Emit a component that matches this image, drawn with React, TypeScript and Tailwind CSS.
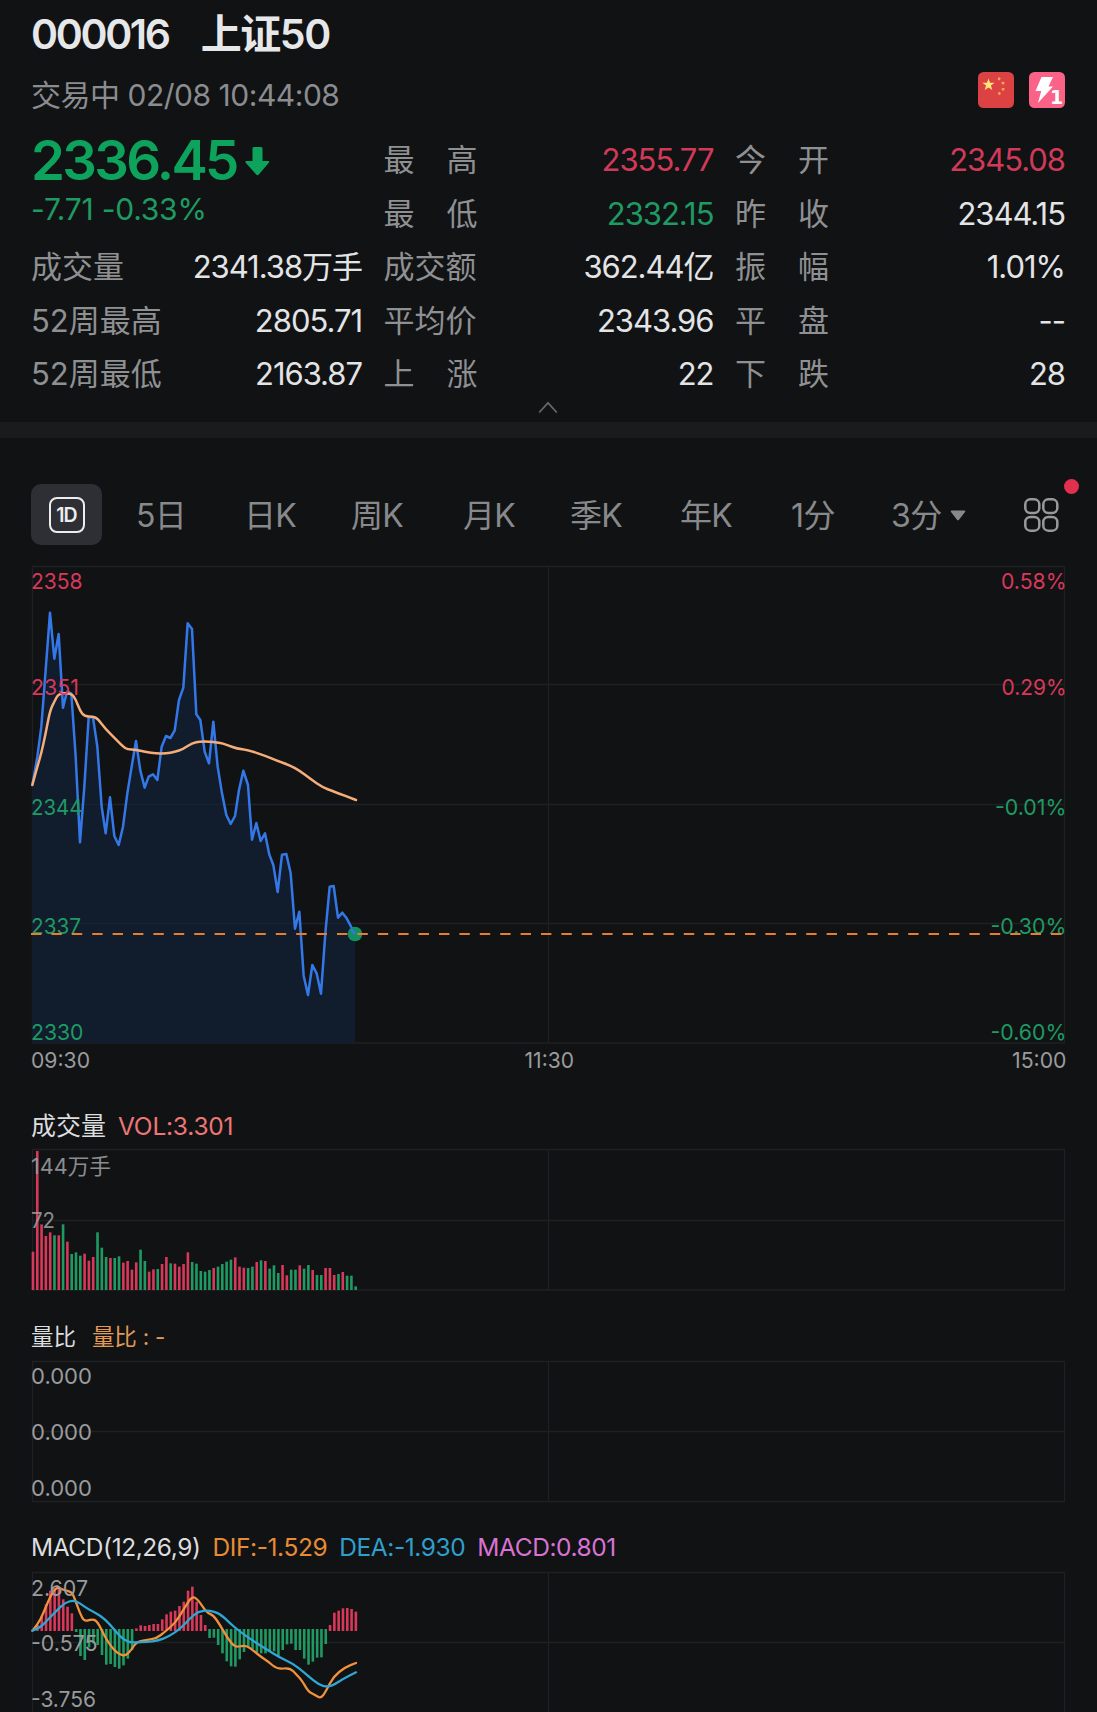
import { clsx } from 'clsx';

type Point = [number, number];

const RED = '#d8385a';
const GREEN = '#1f9a63';
const GRID = '#1e2022';

const stats = [
  { label: '最高', value: '2355.77', tone: 'up' },
  { label: '今开', value: '2345.08', tone: 'up' },
  { label: '最低', value: '2332.15', tone: 'down' },
  { label: '昨收', value: '2344.15' },
  { label: '成交量', value: '2341.38万手' },
  { label: '成交额', value: '362.44亿' },
  { label: '振幅', value: '1.01%' },
  { label: '52周最高', value: '2805.71' },
  { label: '平均价', value: '2343.96' },
  { label: '平盘', value: '--' },
  { label: '52周最低', value: '2163.87' },
  { label: '上涨', value: '22' },
  { label: '下跌', value: '28' },
];

const tabs = [
  { label: '5日', width: 'w-[108px]' },
  { label: '日K', width: 'w-[107px]' },
  { label: '周K', width: 'w-[112px]' },
  { label: '月K', width: 'w-[107px]' },
  { label: '季K', width: 'w-[110px]' },
  { label: '年K', width: 'w-[111px]' },
  { label: '1分', width: 'w-[100px]' },
];

// plot units: 3 per pixel, one minute is 12.9 wide
const price: Point[] = [
  [37, 675], [52, 590], [64, 500], [77, 330], [90, 158], [103, 296], [116, 222], [129, 443],
  [141, 395], [154, 400], [167, 590], [180, 847], [193, 680], [206, 472], [219, 472], [232, 560],
  [245, 740], [257, 820], [270, 712], [283, 828], [296, 855], [309, 800], [322, 700], [335, 620],
  [348, 543], [361, 632], [374, 683], [386, 650], [399, 643], [412, 660], [425, 560], [438, 528],
  [451, 534], [464, 512], [477, 420], [490, 383], [503, 190], [516, 207], [529, 463], [541, 480],
  [554, 575], [567, 610], [580, 485], [593, 620], [606, 700], [619, 765], [632, 792], [645, 768],
  [657, 690], [670, 632], [684, 675], [696, 839], [709, 789], [722, 843], [735, 820], [748, 884],
  [760, 915], [773, 996], [786, 884], [799, 882], [812, 940], [825, 1106], [838, 1055], [851, 1247],
  [864, 1305], [877, 1215], [890, 1240], [903, 1301], [916, 1120], [929, 980], [941, 978],
  [954, 1073], [967, 1058], [980, 1075], [1005, 1122],
];

const average: Point[] = [
  [37, 675], [52, 620], [64, 580], [77, 520], [90, 452], [103, 425], [116, 400], [154, 400],
  [167, 418], [180, 452], [193, 469], [219, 470], [232, 475], [257, 507], [283, 533], [309, 560],
  [322, 568], [348, 569], [374, 576], [412, 581], [438, 580], [464, 576], [490, 567], [516, 549],
  [541, 544], [593, 546], [625, 556], [650, 566], [684, 570], [735, 587], [770, 602], [810, 616],
  [840, 633], [870, 656], [910, 683], [940, 694], [1008, 720],
];

const dif: Point[] = [
  [37, 212], [52, 195], [70, 160], [90, 110], [110, 80], [130, 90], [155, 95], [165, 118],
  [180, 160], [193, 185], [215, 177], [230, 182], [245, 210], [260, 240], [280, 268], [300, 285],
  [318, 287], [335, 268], [350, 245], [380, 240], [410, 235], [435, 215], [465, 190], [490, 150],
  [516, 107], [535, 120], [560, 158], [580, 165], [600, 195], [625, 238], [645, 261], [665, 258],
  [680, 257], [700, 272], [725, 292], [745, 305], [772, 328], [810, 323], [830, 345], [845, 360],
  [865, 395], [885, 405], [903, 416], [920, 390], [940, 350], [975, 322], [1008, 309],
];

const dea: Point[] = [
  [37, 212], [60, 203], [80, 183], [110, 152], [135, 128], [160, 121], [180, 130], [205, 148],
  [240, 165], [270, 193], [300, 230], [325, 247], [350, 247], [380, 246], [415, 242], [445, 230],
  [480, 207], [510, 175], [535, 154], [565, 151], [600, 160], [630, 190], [660, 215], [700, 243],
  [740, 268], [780, 293], [820, 312], [850, 335], [880, 362], [910, 380], [935, 379], [970, 356],
  [1008, 337],
];

const volumeTops = [
  470, 168, 388, 423, 412, 421, 421, 388, 440, 477, 472, 482, 476, 497, 486, 412, 458, 486, 489,
  489, 484, 503, 498, 524, 502, 464, 498, 530, 523, 522, 507, 486, 505, 506, 515, 507, 472, 501,
  506, 528, 530, 525, 519, 515, 507, 500, 494, 487, 515, 518, 519, 515, 501, 496, 498, 521, 511,
  534, 510, 541, 524, 524, 511, 521, 510, 525, 540, 540, 519, 519, 540, 537, 531, 542, 542, 574,
];
const volumeColors =
  'RRRRRGRGRGGGRRRGGGRGGRRRRGGRRGRRGRRRRGGGGGRGGGGRRRGGRGRGGGRRGGRGGRGGRRRGRGGG';

const macdBars = [
  210, 195, 170, 133, 92, 85, 86, 118, 140, 160, 216, 288, 300, 262, 250, 255, 285, 314, 312, 321,
  326, 316, 296, 270, 205, 196, 198, 195, 192, 192, 178, 163, 155, 152, 138, 125, 92, 80, 125, 165,
  195, 234, 233, 255, 280, 304, 319, 320, 298, 276, 262, 268, 278, 280, 280, 274, 274, 290, 270,
  253, 251, 270, 270, 296, 314, 305, 293, 292, 252, 195, 158, 152, 145, 144, 147, 155,
];

const toPath = (points: Point[]) =>
  points.map(([x, y], i) => `${i ? 'L' : 'M'}${x} ${y}`).join(' ');

// rounds the corners by running quadratic curves through the midpoints
const toSmoothPath = (points: Point[]) => {
  let d = `M${points[0][0]} ${points[0][1]}`;
  for (let i = 1; i < points.length - 1; i++) {
    const [x, y] = points[i];
    const [nx, ny] = points[i + 1];
    d += ` Q${x} ${y} ${(x + nx) / 2} ${(y + ny) / 2}`;
  }
  const last = points[points.length - 1];
  return `${d} L${last[0]} ${last[1]}`;
};

interface LabelProps {
  x: number;
  y: number;
  w: number;
  fill?: string;
  children: string;
}

function Label({ x, y, w, fill = '#9a9b9d', children }: LabelProps) {
  return (
    <text x={x} y={y} textLength={w} lengthAdjust="spacingAndGlyphs" fontSize={22} fill={fill}>
      {children}
    </text>
  );
}

function Grid({ rows, bottom }: { rows: number[]; bottom: number }) {
  return (
    <g stroke={GRID} strokeWidth={1.3}>
      {rows.map((y) => (
        <line key={y} x1={32} x2={1065} y1={y} y2={y} />
      ))}
      {[32.5, 548.5, 1064.5].map((x) => (
        <line key={x} x1={x} x2={x} y1={rows[0]} y2={bottom} />
      ))}
    </g>
  );
}

function Header() {
  return (
    <header className="h-[123px] pl-[31px] pr-8">
      <h1 className="flex h-[69px] items-center gap-[32px] pt-px text-[41px] font-semibold text-[#e6e7e9]">
        <span className="tracking-[-0.057em]">000016</span>
        <span className="tracking-[-0.035em]">上证50</span>
      </h1>
      <div className="flex items-start justify-between">
        <p className="pt-[3px] text-[30px] leading-[46px] tracking-[-0.016em] text-[#8b8c8f]">
          交易中 02/08 10:44:08
        </p>
        <div className="flex gap-[15px] pt-[3px]">
          <svg width="36" height="36" viewBox="0 0 36 36">
            <rect width="36" height="36" rx="5.5" fill="#dc4143" />
            <path d="M10.5 6.5l1.500 4.300h4.600l-3.700 2.800 1.400 4.500-3.800-2.700-3.800 2.700 1.400-4.500-3.700-2.800H9z" fill="#fde877" />
            <g fill="#f5a65b">
              <path d="M20.500 5l2.200.9-.8 2.600-2.200-.8z" />
              <path d="M23.500 9.800l3 .2-.4 2.500-2.300-.2z" />
              <path d="M23.500 16.200l3-.3-.2 2.700-2.300-.1z" />
              <path d="M19.800 20.700l2.200-.9.9 2.300-2.200 1.200z" />
            </g>
          </svg>
          <svg width="36" height="36" viewBox="0 0 36 36">
            <rect width="36" height="36" rx="5.5" fill="#fb6288" />
            <path d="M12.5 5H24l-4.5 9.5H24L9 31l3.2-12H6.5z" fill="#fff" />
            <text x="21" y="31.5" fontSize="19" fontWeight="700" fill="#fff" fontFamily="DejaVu Sans, sans-serif" stroke="#fb6288" strokeWidth="2" paintOrder="stroke">
              1
            </text>
          </svg>
        </div>
      </div>
    </header>
  );
}

function Quote() {
  return (
    <section className="h-[299px] pl-[31px] pr-8 pt-[11px]">
      <div className="grid grid-cols-[331px_330px_330px] grid-rows-[repeat(5,53.4px)] gap-x-[21.5px] text-[31px]">
        <div className="row-span-2">
          <div className="flex h-[53px] items-center text-[54.5px] font-semibold leading-[53px] tracking-[-0.049em] text-[#0da35c]">
            2336.45
            <svg className="ml-2" width="25" height="30" viewBox="0 0 25 30">
              <path d="M7.5 2.5Q7.5 1 9 1h7q1.5 0 1.5 1.5V15H23q2 0 .8 1.8l-10 11.700q-1.300 1.500-2.600 0L.7 16.800Q-.3 15 1.500 15h6z" fill="#0da35c" />
            </svg>
          </div>
          <div className="text-[30px] leading-[44px] tracking-[-0.008em] text-[#1f9a63]">-7.71 -0.33%</div>
        </div>
        {stats.map((item) => (
          <div key={item.label} className="flex items-center justify-between">
            <span
              className={clsx(
                'flex text-[31px] text-[#8f9092]',
                item.label.length === 2 && 'w-[94px] justify-between'
              )}
            >
              {item.label.length === 2 ? item.label.split('').map((c) => <span key={c}>{c}</span>) : item.label}
            </span>
            <span
              className={clsx(
                'tracking-[-0.033em]',
                item.tone === 'up' && 'text-[#d03a58]',
                item.tone === 'down' && 'text-[#1f9a63]',
                !item.tone && 'text-[#e3e4e6]'
              )}
            >
              {item.value}
            </span>
          </div>
        ))}
      </div>
      <svg className="mx-auto" width="20" height="13" viewBox="0 0 20 13" fill="none" stroke="#66676a" strokeWidth="1.8">
        <path d="M1.2 11.500L10 1.800l8.800 9.700" />
      </svg>
    </section>
  );
}

function PeriodTabs() {
  return (
    <nav className="relative mt-[46px] flex h-[61px] items-center pl-[31px] text-[32px] leading-[50px] text-[#88898b]">
      <button className="mr-[34px] flex h-[61px] w-[71px] items-center justify-center rounded-[10px] bg-[#2e2f35]">
        <span className="flex h-[36px] w-[36px] items-center justify-center rounded-[8px] border-[2.5px] border-[#eceded] text-[19.5px] font-semibold tracking-[-0.05em] text-[#eceded]">
          1D
        </span>
      </button>
      {tabs.map((tab) => (
        <button key={tab.label} className={clsx('pt-0.5 text-left tracking-[-0.02em]', tab.width)}>
          {tab.label}
        </button>
      ))}
      <button className="flex w-[133px] items-center gap-2 pt-0.5 text-left tracking-[-0.02em]">
        3分
        <svg width="16" height="11" viewBox="0 0 16 11">
          <path d="M1.5.5h13q1.500 0 .5 1.500L9 9.700q-1 1-2 0L1 2Q0 .5 1.500.5z" fill="#88898b" />
        </svg>
      </button>
      <svg width="35" height="34" viewBox="0 0 35 34" fill="none" stroke="#98999b" strokeWidth="2.500">
        <rect x="1.3" y="1.3" width="14" height="13.800" rx="5" />
        <rect x="19.300" y="1.300" width="14" height="13.800" rx="5" />
        <rect x="1.300" y="18.900" width="14" height="13.800" rx="5" />
        <rect x="19.300" y="18.900" width="14" height="13.800" rx="5" />
      </svg>
      <span className="absolute right-[18px] -top-[5px] h-[15px] w-[15px] rounded-full bg-[#e0304e]" />
    </nav>
  );
}

function PriceChart() {
  return (
    <svg className="block" width="1097" height="540" viewBox="0 545 1097 540">
      <Grid rows={[566.5, 684.5, 804.5, 923.5, 1043]} bottom={1043} />
      <g transform="translate(20 560) scale(0.33333)" strokeLinejoin="round">
        <path d={`${toPath(price)} V1449 H37 Z`} fill="#111c2d" />
        <path d="M37 1090H1005M37 733H1005" stroke="#1a2636" strokeWidth={3} />
        <path d={toPath(price)} fill="none" stroke="#3478e8" strokeWidth={7.5} />
        <path d={toSmoothPath(average)} fill="none" stroke="#f5ad7a" strokeWidth={7.5} strokeLinecap="round" />
      </g>
      <Label x={31} y={588.5} w={51.5} fill={RED}>2358</Label>
      <Label x={31} y={695} w={48} fill={RED}>2351</Label>
      <Label x={31} y={814.5} w={51.5} fill={GREEN}>2344</Label>
      <Label x={31} y={934} w={50} fill={GREEN}>2337</Label>
      <Label x={31} y={1040} w={52.5} fill={GREEN}>2330</Label>
      <Label x={1001} y={588.5} w={65.5} fill={RED}>0.58%</Label>
      <Label x={1001.5} y={695} w={65} fill={RED}>0.29%</Label>
      <Label x={995} y={814.5} w={71.5} fill={GREEN}>-0.01%</Label>
      <Label x={990.5} y={934} w={76} fill={GREEN}>-0.30%</Label>
      <Label x={990.5} y={1040} w={76} fill={GREEN}>-0.60%</Label>
      <Label x={31} y={1068} w={59}>09:30</Label>
      <Label x={524.5} y={1068} w={49.5}>11:30</Label>
      <Label x={1012} y={1068} w={54.5}>15:00</Label>
      <circle cx={355} cy={934} r={7.3} fill="#128f63" />
      <line x1={31} x2={1064} y1={934} y2={934} stroke="#e87d2e" strokeWidth={2.2} strokeDasharray="10.4 10" />
      <path d="M351 929l4 5" stroke="#3478e8" strokeWidth={2.3} />
    </svg>
  );
}

function VolumeChart() {
  return (
    <section>
      <div className="flex h-[54px] items-center gap-[12px] px-[31px] pt-[28px] text-[24.5px] leading-[26px]">
        <span className="text-[25px] text-[#dcdddf]">成交量</span>
        <span className="tracking-[-0.009em] text-[#ec7776]">VOL:3.301</span>
      </div>
      <svg className="block overflow-visible" width="1097" height="175" viewBox="0 1139 1097 175">
        <Grid rows={[1149.5, 1220.5, 1290]} bottom={1290} />
        <g transform="translate(20 1095) scale(0.33333)">
          {volumeTops.map((top, i) => (
            <rect key={i} x={35 + i * 12.91} y={top} width={7.8} height={585 - top} fill={volumeColors[i] === 'R' ? RED : GREEN} />
          ))}
        </g>
        <g opacity={0.9}>
          <Label x={31} y={1174} w={80}>144万手</Label>
          <Label x={31} y={1228} w={24}>72</Label>
        </g>
      </svg>
    </section>
  );
}

function RatioChart() {
  return (
    <section>
      <div className="flex h-[43px] items-center gap-[16px] px-[31px] pt-[3px] text-[22.5px] leading-[40px]">
        <span className="text-[#dcdddf]">量比</span>
        <span className="tracking-[-0.01em] text-[#e29a55]">量比 : -</span>
      </div>
      <svg className="block" width="1097" height="170" viewBox="0 1357 1097 170">
        <Grid rows={[1361.5, 1431.5, 1501.5]} bottom={1501} />
        <Label x={31} y={1384} w={61}>0.000</Label>
        <Label x={31} y={1440} w={61}>0.000</Label>
        <Label x={31} y={1496} w={61}>0.000</Label>
      </svg>
    </section>
  );
}

function MacdChart() {
  return (
    <section>
      <div className="flex h-[41px] items-center gap-[12px] px-[31px] text-[24.5px] leading-[41px] tracking-[-0.017em]">
        <span className="text-[#dcdddf]">MACD(12,26,9)</span>
        <span className="text-[#e78b35]">DIF:-1.529</span>
        <span className="text-[#2f9fcb]">DEA:-1.930</span>
        <span className="text-[#d873d4]">MACD:0.801</span>
      </div>
      <svg className="block" width="1097" height="144" viewBox="0 1568 1097 144">
        <Grid rows={[1572.5, 1642.5]} bottom={1712} />
        <g transform="translate(20 1560) scale(0.33333)" fill="none" strokeWidth={6.8} strokeLinecap="round" strokeLinejoin="round">
          {macdBars.map((v, i) => {
            const up = v < 212;
            return (
              <rect
                key={i}
                x={35.5 + i * 12.91}
                y={up ? v : 207}
                width={7.8}
                height={up ? 213 - v : v - 207}
                fill={up ? RED : GREEN}
              />
            );
          })}
          <path d={toSmoothPath(dif)} stroke="#f0923c" />
          <path d={toSmoothPath(dea)} stroke="#2ea7d2" />
        </g>
        <Label x={31} y={1595.5} w={57}>2.607</Label>
        <Label x={31} y={1651.3} w={66.5}>-0.575</Label>
        <Label x={31} y={1707} w={65}>-3.756</Label>
      </svg>
    </section>
  );
}

export default function App() {
  return (
    <main className="h-[1712px] w-[1097px] overflow-hidden bg-[#111214] font-['Inter','Noto_Sans_CJK_SC',sans-serif]">
      <Header />
      <Quote />
      <div className="h-4 bg-[#1a1b1d]" />
      <PeriodTabs />
      <PriceChart />
      <VolumeChart />
      <RatioChart />
      <MacdChart />
    </main>
  );
}
